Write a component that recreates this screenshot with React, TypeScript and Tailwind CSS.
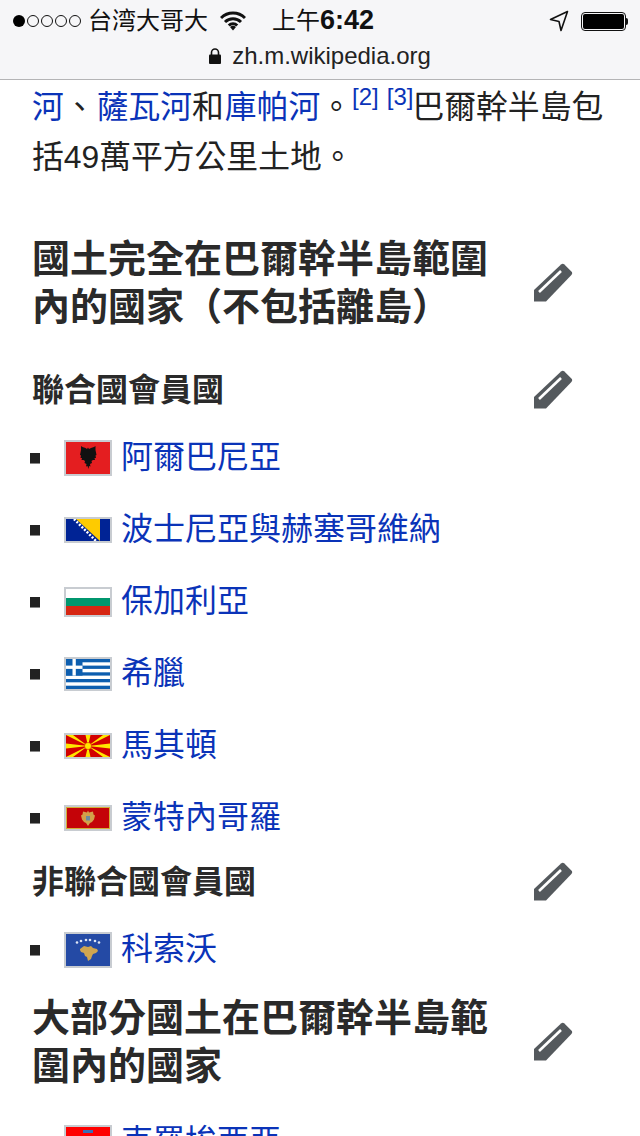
const cjk = 'font-["Liberation_Sans","Noto_Sans_CJK_TC",sans-serif]';

function Pencil() {
  return (
    <svg width="40" height="40" viewBox="0 0 40 40" className="shrink-0">
      <path d="M28 1.500a2.500 2.500 0 0 1 3.400 0l7 7a2.500 2.500 0 0 1 0 3.400L13 38.500H1V27z" fill="#54595d" />
      <path d="M28 8L6 29" stroke="#fff" strokeWidth="2.600" />
    </svg>
  );
}

function Flag({ h, children }: { h: number; children: React.ReactNode }) {
  return (
    <svg width="48" height={h} viewBox={`0 0 44 ${h - 4}`} className="block shrink-0 border-2 border-[#c8ccd1] box-border">
      {children}
    </svg>
  );
}

const Albania = (
  <Flag h={36}>
    <rect width="44" height="32" fill="#e41e20" />
    <path d="M21 7l1-1.500 1 1.500 2-1 3-1 1.500-1v4l1 5-1 .5 .5 2.500-1.500 0 .5 2-2 0-1.500 1 .5 2-2 1 .5 2.500-1.500-.5-.5 3-1-3-1.500 .5 .5-2.500-2-1 .5-2-1.500-1-2 0 .5-2-1.500 0 .5-2.500-1-.5 1-5V4l1.500 1 3 1z" fill="#111" />
  </Flag>
);
const Bosnia = (
  <Flag h={26}>
    <rect width="44" height="22" fill="#002395" />
    <path d="M10 0h24v22z" fill="#fecb00" />
    <path d="M8 0l22 22" stroke="#fff" strokeWidth="2.500" strokeDasharray="2 1.600" />
  </Flag>
);
const Bulgaria = (
  <Flag h={30}>
    <rect width="44" height="9" fill="#fff" />
    <rect y="9" width="44" height="8" fill="#00966e" />
    <rect y="17" width="44" height="9" fill="#d62612" />
  </Flag>
);
const Greece = (
  <Flag h={34}>
    <rect width="44" height="30" fill="#fff" />
    {[0, 6.600, 13.300, 20, 26.700].map(y => <rect key={y} y={y} width="44" height="3.300" fill="#0d5eaf" />)}
    <rect width="16.500" height="16.600" fill="#0d5eaf" />
    <rect x="6.500" width="3.300" height="16.600" fill="#fff" />
    <rect y="6.600" width="16.500" height="3.300" fill="#fff" />
  </Flag>
);
const Macedonia = (
  <Flag h={26}>
    <rect width="44" height="22" fill="#d20000" />
    <path d="M0 0h7l15 11L37 0h7L22 11zM0 22h7l15-11 15 11h7L22 11zM19.500 0h5L22 11zM19.500 22h5L22 11zM0 8.500v5L22 11zM44 8.500v5L22 11z" fill="#ffe600" />
    <circle cx="22" cy="11" r="3.500" fill="#ffe600" stroke="#d20000" strokeWidth=".5" />
  </Flag>
);
const Montenegro = (
  <Flag h={26}>
    <rect width="44" height="22" fill="#d4af3a" />
    <rect x="1" y="1" width="42" height="20" fill="#c40308" />
    <path d="M22 3.500l1 2 4-1 .5 3 1.500 1-1 4-2 2.500-2 1-2 3-2-3-2-1-2-2.500-1-4 1.500-1 .5-3 4 1z" fill="#d3a04a" />
    <rect x="20" y="9" width="4" height="4.500" fill="#6d8c9e" />
  </Flag>
);
const Kosovo = (
  <Flag h={36}>
    <rect width="44" height="32" fill="#244aa5" />
    <path d="M14 15l4-3 4 1 3-1 2 2 4 1 1 2-2 2-3 1-1 2-1 3-3 2-1-4-2-1-1-3-3-1-1-2z" fill="#d0a650" />
    {[11, 15, 20, 24, 29, 33].map((x, i) => (
      <circle key={x} cx={x} cy={i === 0 || i === 5 ? 8.500 : i === 1 || i === 4 ? 7 : 6} r="1.300" fill="#dfe6f5" />
    ))}
  </Flag>
);
const Croatia = (
  <Flag h={34}>
    <rect width="44" height="10" fill="#f00" />
    <rect y="10" width="44" height="10" fill="#fff" />
    <rect y="20" width="44" height="10" fill="#171796" />
    <rect x="17" y="6" width="10" height="13" fill="#f00" />
    <rect x="17" y="3" width="10" height="3" fill="#3a6fb5" />
  </Flag>
);

function Item({ flag, name, className }: { flag: React.ReactNode; name: string; className: string }) {
  return (
    <li className={`flex items-center pl-[30px] ${className}`}>
      <span className="w-[10px] h-[11px] mt-[2px] bg-[#222] border-b border-[#888] shrink-0" />
      <span className="ml-[24px] mr-[9px] mt-[2px]">{flag}</span>
      <a className="text-[#0a33b8] text-[32px] leading-[50px]">{name}</a>
    </li>
  );
}

function Heading({ children, className }: { children: React.ReactNode; className: string }) {
  return (
    <div className={`flex items-center justify-between pl-[32px] pr-[67px] ${className}`}>
      <h2 className="w-[460px] text-[38px] leading-[48px] font-bold text-[#2a2a2a]">{children}</h2>
      <Pencil />
    </div>
  );
}

function SubHeading({ children, className }: { children: React.ReactNode; className: string }) {
  return (
    <div className={`flex items-center justify-between pl-[32px] pr-[67px] ${className}`}>
      <h3 className="text-[32px] leading-[40px] font-bold text-[#2a2a2a]">{children}</h3>
      <Pencil />
    </div>
  );
}

export default function App() {
  return (
    <div className={`w-[640px] h-[1136px] overflow-hidden bg-white text-[#222] ${cjk}`}>
      <header className="h-[80px] bg-[#f6f6f8] border-b border-[#b4b4b6] text-[#111]">
        <div className="h-[42px] flex items-center pl-[13px] pr-[12px]">
          <span className="flex items-center gap-[2px]">
            <span className="w-[12px] h-[12px] rounded-full bg-black" />
            {[0, 1, 2, 3].map(i => <span key={i} className="w-[12px] h-[12px] rounded-full border border-[#111]" />)}
          </span>
          <span className="ml-[7px] text-[24px]">台湾大哥大</span>
          <svg width="26" height="20" viewBox="1 1 26 19" className="ml-[12px]">
            <path d="M2 7.500a17 17 0 0 1 24 0M6 11.500a11.500 11.500 0 0 1 16 0M9.800 15a6 6 0 0 1 8.400 0" fill="none" stroke="#111" strokeWidth="3" />
            <path d="M11 16.500a4.500 4.500 0 0 1 6 0L14 20z" fill="#111" />
          </svg>
          <span className="ml-[26px] text-[24px] font-bold"><span className="font-normal">上午</span><span className="text-[27px] leading-[24px]">6:42</span></span>
          <svg width="20" height="22" viewBox="0 0 20 22" className="ml-auto">
            <path d="M18.500 1.500L1.500 9.500 10 11.500 12 20.500z" fill="none" stroke="#111" strokeWidth="1.600" strokeLinejoin="round" />
          </svg>
          <span className="ml-[12px] w-[45px] h-[19px] rounded-[4px] border border-[#111] p-[1px] flex">
            <span className="flex-1 rounded-[2px] bg-black" />
          </span>
          <span className="w-[2px] h-[7px] bg-[#111] rounded-r-sm" />
        </div>
        <div className="h-[28px] flex items-center justify-center">
          <svg width="12" height="16" viewBox="0 0 12 16" className="mr-[11px]">
            <path d="M2.500 7V4.500a3.500 3.500 0 0 1 7 0V7" fill="none" stroke="#111" strokeWidth="1.600" />
            <rect y="6.500" width="12" height="9.500" rx="1" fill="#111" />
          </svg>
          <span className="text-[24px] text-[#222]">zh.m.wikipedia.org</span>
        </div>
      </header>

      <p className="pl-[32px] pr-[30px] text-[31.800px] leading-[50px] pt-[2px] whitespace-nowrap">
        <a className="text-[#0a33b8]">河</a>、<a className="text-[#0a33b8] ml-[1px]">薩瓦河</a>和<a className="text-[#0a33b8] ml-[1px]">庫帕河</a>。
        <sup className="text-[24px] text-[#0a33b8] align-baseline relative top-[-13px] mr-[8px]">[2]</sup>
        <sup className="text-[24px] text-[#0a33b8] align-baseline relative top-[-13px] mr-[-1px]">[3]</sup>
        巴爾幹半島包<br />括49萬平方公里土地。
      </p>

      <Heading className="mt-[53px]">國土完全在巴爾幹半島範圍內的國家（不包括離島）</Heading>
      <SubHeading className="mt-[39px]">聯合國會員國</SubHeading>

      <ul className="mt-[22px]">
        <Item flag={Albania} name="阿爾巴尼亞" className="h-[50px]" />
        <Item flag={Bosnia} name="波士尼亞與赫塞哥維納" className="h-[50px] mt-[22px]" />
        <Item flag={Bulgaria} name="保加利亞" className="h-[50px] mt-[22px]" />
        <Item flag={Greece} name="希臘" className="h-[50px] mt-[22px]" />
        <Item flag={Macedonia} name="馬其頓" className="h-[50px] mt-[22px]" />
        <Item flag={Montenegro} name="蒙特內哥羅" className="h-[50px] mt-[22px]" />
      </ul>

      <SubHeading className="mt-[20px]">非聯合國會員國</SubHeading>
      <ul className="mt-[22px]">
        <Item flag={Kosovo} name="科索沃" className="h-[50px]" />
      </ul>
      <Heading className="mt-[20px]">大部分國土在巴爾幹半島範圍內的國家</Heading>
      <ul className="mt-[26px]">
        <Item flag={Croatia} name="克羅埃西亞" className="h-[50px]" />
      </ul>
    </div>
  );
}
